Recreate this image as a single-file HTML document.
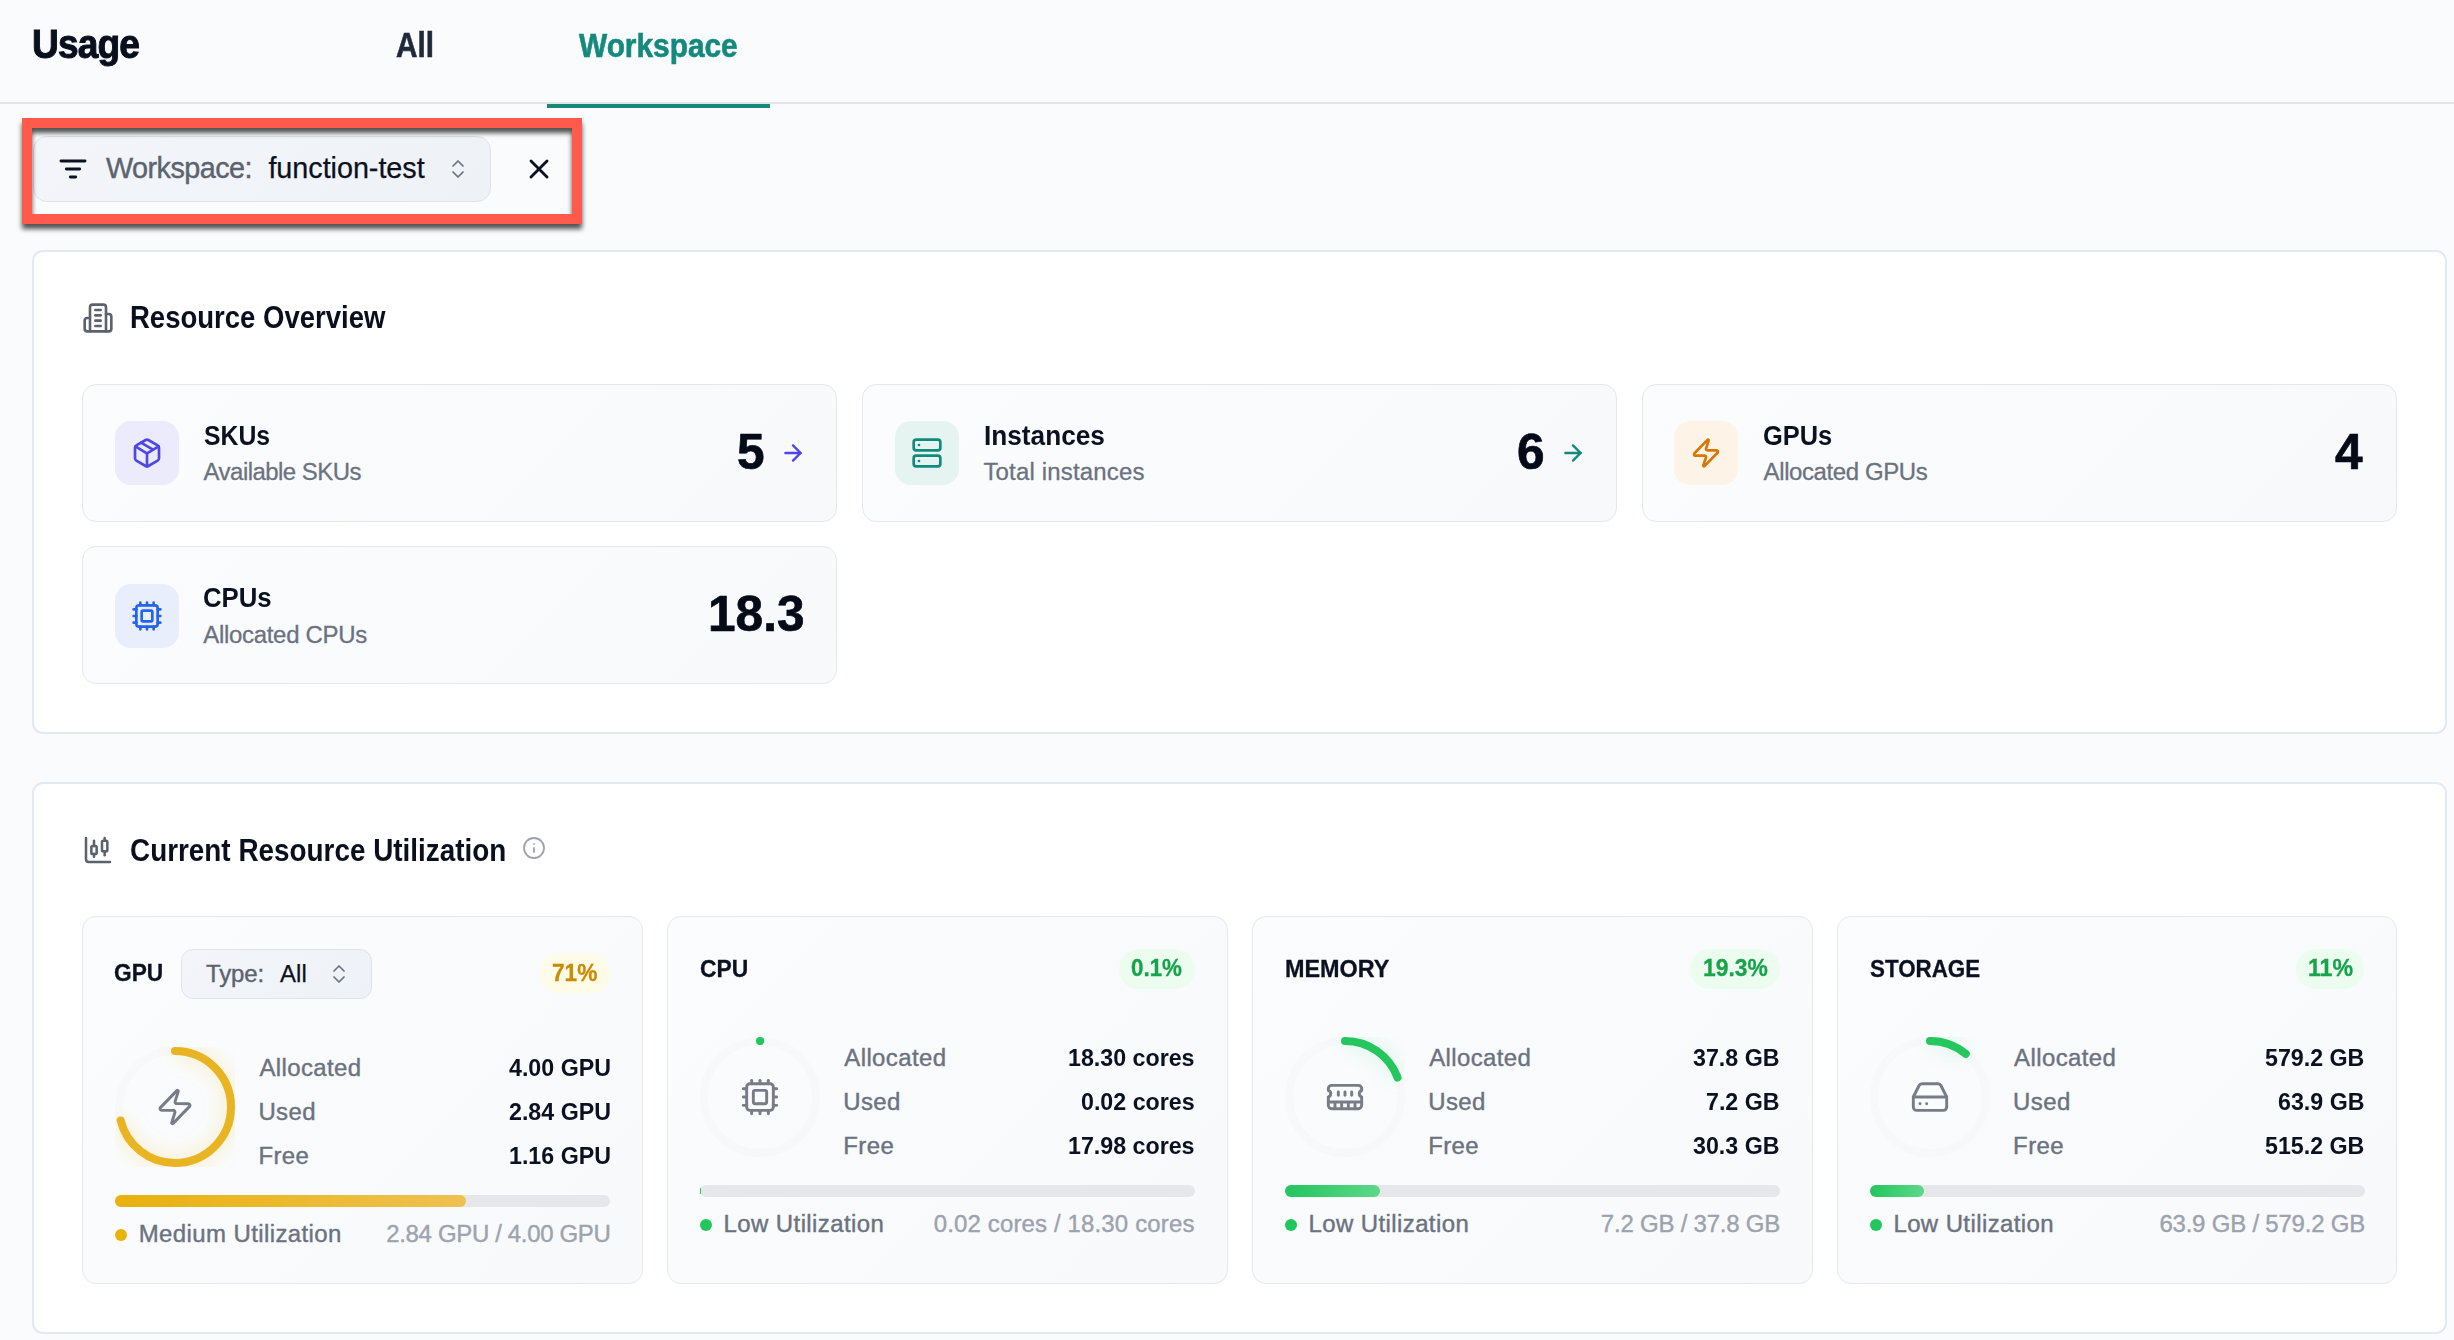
<!DOCTYPE html>
<html><head><meta charset="utf-8"><title>Usage</title>
<style>
html,body{margin:0;padding:0;}
body{width:2454px;height:1340px;overflow:hidden;position:relative;background:#fafbfc;font-family:"Liberation Sans",sans-serif;}
.t{position:absolute;white-space:nowrap;line-height:1;}
.b{position:absolute;}
.ic{position:absolute;overflow:visible;}
.dn{position:absolute;overflow:hidden;}
.frame{position:absolute;left:22px;top:118px;width:560px;height:106px;box-sizing:border-box;border:10px solid #ff5a4c;filter:drop-shadow(0 5px 2.5px rgba(0,0,0,0.68));}
</style></head><body>
<div class="b" style="left:0px;top:102px;width:2454px;height:1.5px;background:#e3e4e6;"></div><div class="b" style="left:547px;top:104px;width:223px;height:4px;background:#14897c;"></div><div class="b" style="left:33px;top:136.3px;width:457.5px;height:65.3px;background:linear-gradient(135deg,#f3f5f9,#eef2f7);border:1.5px solid #dde3ec;border-radius:14px;box-sizing:border-box;"></div><div class="b" style="left:32.3px;top:250px;width:2414.3px;height:484px;background:#fff;border:2px solid #e3e9f1;border-radius:11px;box-sizing:border-box;"></div><div class="b" style="left:32.3px;top:781.8px;width:2414.3px;height:551.9px;background:#fff;border:2px solid #e3e9f1;border-radius:11px;box-sizing:border-box;"></div><div class="b" style="left:82.2px;top:384.3px;width:755.2px;height:137.3px;background:linear-gradient(135deg,#fbfcfd,#f8f9fb);border:1.5px solid #e3e8ef;border-radius:14px;box-sizing:border-box;"></div><div class="b" style="left:862.1px;top:384.3px;width:755.2px;height:137.3px;background:linear-gradient(135deg,#fbfcfd,#f8f9fb);border:1.5px solid #e3e8ef;border-radius:14px;box-sizing:border-box;"></div><div class="b" style="left:1642.0px;top:384.3px;width:755.2px;height:137.3px;background:linear-gradient(135deg,#fbfcfd,#f8f9fb);border:1.5px solid #e3e8ef;border-radius:14px;box-sizing:border-box;"></div><div class="b" style="left:82.2px;top:546.4px;width:755.2px;height:137.3px;background:linear-gradient(135deg,#fbfcfd,#f8f9fb);border:1.5px solid #e3e8ef;border-radius:14px;box-sizing:border-box;"></div><div class="b" style="left:115px;top:421.3px;width:64px;height:64px;background:#ebebfc;border-radius:16px;"></div><div class="b" style="left:894.6px;top:421.3px;width:64px;height:64px;background:#e6f4f1;border-radius:16px;"></div><div class="b" style="left:1674.4px;top:421.3px;width:64px;height:64px;background:#fdf3e6;border-radius:16px;"></div><div class="b" style="left:115px;top:583.5px;width:64px;height:64px;background:#e8eefc;border-radius:16px;"></div><div class="b" style="left:82.2px;top:916px;width:560.5px;height:367.5px;background:linear-gradient(135deg,#fbfcfd,#f8f9fb);border:1.5px solid #e3e8ef;border-radius:14px;box-sizing:border-box;"></div><div class="b" style="left:667.1px;top:916px;width:560.5px;height:367.5px;background:linear-gradient(135deg,#fbfcfd,#f8f9fb);border:1.5px solid #e3e8ef;border-radius:14px;box-sizing:border-box;"></div><div class="b" style="left:1252.0px;top:916px;width:560.5px;height:367.5px;background:linear-gradient(135deg,#fbfcfd,#f8f9fb);border:1.5px solid #e3e8ef;border-radius:14px;box-sizing:border-box;"></div><div class="b" style="left:1836.9px;top:916px;width:560.5px;height:367.5px;background:linear-gradient(135deg,#fbfcfd,#f8f9fb);border:1.5px solid #e3e8ef;border-radius:14px;box-sizing:border-box;"></div><div class="b" style="left:180.5px;top:949px;width:191.4px;height:49.8px;background:linear-gradient(135deg,#f3f5f9,#eef2f7);border:1.5px solid #dde3ec;border-radius:12px;box-sizing:border-box;"></div><div class="b" style="left:540.4px;top:954px;width:69.6px;height:39.4px;background:#fefbe6;border-radius:20px;"></div><div class="b" style="left:1119.4px;top:949px;width:75.2px;height:40px;background:#ecfdf0;border-radius:20px;"></div><div class="b" style="left:1690px;top:949px;width:89.8px;height:40px;background:#ecfdf0;border-radius:20px;"></div><div class="b" style="left:2295.8px;top:949px;width:68.4px;height:40px;background:#ecfdf0;border-radius:20px;"></div><div class="b" style="left:115.0px;top:1195px;width:494.9000000000001px;height:12px;background:#e5e7eb;border-radius:6px;"></div><div class="b" style="left:115.0px;top:1195px;width:351.379px;height:12px;background:linear-gradient(90deg,#e8b10e,#efc150);border-radius:6px;"></div><div class="b" style="left:115.0px;top:1229px;width:12px;height:12px;background:#eab308;border-radius:6px;"></div><div class="b" style="left:699.9px;top:1185px;width:494.9px;height:12px;background:#e5e7eb;border-radius:6px;"></div><div class="b" style="left:699.7px;top:1188px;width:1.5px;height:6px;background:#22c55e;border-radius:1px;"></div><div class="b" style="left:699.9px;top:1219px;width:12px;height:12px;background:#22c55e;border-radius:6px;"></div><div class="b" style="left:1284.8px;top:1185px;width:494.9000000000001px;height:12px;background:#e5e7eb;border-radius:6px;"></div><div class="b" style="left:1284.8px;top:1185px;width:95.51570000000002px;height:12px;background:linear-gradient(90deg,#22c55e,#5dd88a);border-radius:6px;"></div><div class="b" style="left:1284.8px;top:1219px;width:12px;height:12px;background:#22c55e;border-radius:6px;"></div><div class="b" style="left:1869.7px;top:1185px;width:494.89999999999986px;height:12px;background:#e5e7eb;border-radius:6px;"></div><div class="b" style="left:1869.7px;top:1185px;width:54.438999999999986px;height:12px;background:linear-gradient(90deg,#22c55e,#5dd88a);border-radius:6px;"></div><div class="b" style="left:1869.7px;top:1219px;width:12px;height:12px;background:#22c55e;border-radius:6px;"></div>
<svg class="dn" style="left:115.0px;top:1047px" width="120" height="120" viewBox="0 0 120 120">
<defs><radialGradient id="gGPU" cx="50%" cy="50%" r="50%"><stop offset="0%" stop-color="#ffffff" stop-opacity="0.7"/><stop offset="100%" stop-color="#ffffff" stop-opacity="0"/></radialGradient>
<filter id="fGPU" x="-30%" y="-30%" width="160%" height="160%"><feGaussianBlur stdDeviation="9"/></filter></defs>
<circle cx="60" cy="60" r="56" fill="none" stroke="#f6f7f9" stroke-opacity="0.8" stroke-width="8"/>
<circle cx="60" cy="60" r="56" fill="none" stroke="rgba(234,179,8,0.16)" stroke-width="16" stroke-dasharray="249.82 351.86" transform="rotate(-90 60 60)" filter="url(#fGPU)"/>
<circle cx="60" cy="60" r="56" fill="none" stroke="#e9b422" stroke-width="8" stroke-linecap="round" stroke-dasharray="249.82 351.86" transform="rotate(-90 60 60)"/>
</svg><svg class="dn" style="left:699.9px;top:1037px" width="120" height="120" viewBox="0 0 120 120">
<defs><radialGradient id="gCPU" cx="50%" cy="50%" r="50%"><stop offset="0%" stop-color="#ffffff" stop-opacity="0.7"/><stop offset="100%" stop-color="#ffffff" stop-opacity="0"/></radialGradient>
<filter id="fCPU" x="-30%" y="-30%" width="160%" height="160%"><feGaussianBlur stdDeviation="9"/></filter></defs>
<circle cx="60" cy="60" r="56" fill="none" stroke="#f6f7f9" stroke-opacity="0.8" stroke-width="8"/>
<circle cx="60" cy="60" r="56" fill="none" stroke="rgba(34,197,94,0.10)" stroke-width="16" stroke-dasharray="0.35 351.86" transform="rotate(-90 60 60)" filter="url(#fCPU)"/>
<circle cx="60" cy="60" r="56" fill="none" stroke="#26c65f" stroke-width="8" stroke-linecap="round" stroke-dasharray="0.35 351.86" transform="rotate(-90 60 60)"/>
</svg><svg class="dn" style="left:1284.8px;top:1037px" width="120" height="120" viewBox="0 0 120 120">
<defs><radialGradient id="gMEMORY" cx="50%" cy="50%" r="50%"><stop offset="0%" stop-color="#ffffff" stop-opacity="0.7"/><stop offset="100%" stop-color="#ffffff" stop-opacity="0"/></radialGradient>
<filter id="fMEMORY" x="-30%" y="-30%" width="160%" height="160%"><feGaussianBlur stdDeviation="9"/></filter></defs>
<circle cx="60" cy="60" r="56" fill="none" stroke="#f6f7f9" stroke-opacity="0.8" stroke-width="8"/>
<circle cx="60" cy="60" r="56" fill="none" stroke="rgba(34,197,94,0.10)" stroke-width="16" stroke-dasharray="67.91 351.86" transform="rotate(-90 60 60)" filter="url(#fMEMORY)"/>
<circle cx="60" cy="60" r="56" fill="none" stroke="#26c65f" stroke-width="8" stroke-linecap="round" stroke-dasharray="67.91 351.86" transform="rotate(-90 60 60)"/>
</svg><svg class="dn" style="left:1869.7px;top:1037px" width="120" height="120" viewBox="0 0 120 120">
<defs><radialGradient id="gSTORAGE" cx="50%" cy="50%" r="50%"><stop offset="0%" stop-color="#ffffff" stop-opacity="0.7"/><stop offset="100%" stop-color="#ffffff" stop-opacity="0"/></radialGradient>
<filter id="fSTORAGE" x="-30%" y="-30%" width="160%" height="160%"><feGaussianBlur stdDeviation="9"/></filter></defs>
<circle cx="60" cy="60" r="56" fill="none" stroke="#f6f7f9" stroke-opacity="0.8" stroke-width="8"/>
<circle cx="60" cy="60" r="56" fill="none" stroke="rgba(34,197,94,0.10)" stroke-width="16" stroke-dasharray="38.70 351.86" transform="rotate(-90 60 60)" filter="url(#fSTORAGE)"/>
<circle cx="60" cy="60" r="56" fill="none" stroke="#26c65f" stroke-width="8" stroke-linecap="round" stroke-dasharray="38.70 351.86" transform="rotate(-90 60 60)"/>
</svg>
<svg class="ic" style="left:82px;top:302px;" width="32" height="32" viewBox="0 0 24 24" fill="none" stroke="#5b626e" stroke-width="1.95" stroke-linecap="round" stroke-linejoin="round"><path d="M6 22V4a2 2 0 0 1 2-2h8a2 2 0 0 1 2 2v18Z"/><path d="M6 12H4a2 2 0 0 0-2 2v6a2 2 0 0 0 2 2h2"/><path d="M18 9h2a2 2 0 0 1 2 2v9a2 2 0 0 1-2 2h-2"/><path d="M10 6h4"/><path d="M10 10h4"/><path d="M10 14h4"/><path d="M10 18h4"/></svg><svg class="ic" style="left:82px;top:834px;" width="32" height="32" viewBox="0 0 24 24" fill="none" stroke="#5b626e" stroke-width="1.9" stroke-linecap="round" stroke-linejoin="round"><path d="M9 5v4"/><rect width="4" height="6" x="7" y="9" rx="1"/><path d="M9 15v2"/><path d="M17 3v2"/><rect width="4" height="8" x="15" y="5" rx="1"/><path d="M17 13v3"/><path d="M3 3v16a2 2 0 0 0 2 2h16"/></svg><svg class="ic" style="left:522px;top:836px;" width="24" height="24" viewBox="0 0 24 24" fill="none" stroke="#9ca3af" stroke-width="1.8" stroke-linecap="round" stroke-linejoin="round"><circle cx="12" cy="12" r="10"/><path d="M12 16v-4"/><path d="M12 8h.01"/></svg><svg class="ic" style="left:57px;top:153px;" width="32" height="32" viewBox="0 0 24 24" fill="none" stroke="#0b1120" stroke-width="2.2" stroke-linecap="round" stroke-linejoin="round"><path d="M3 6h18"/><path d="M7 12h10"/><path d="M10 18h4"/></svg><svg class="ic" style="left:446px;top:157px;" width="24" height="24" viewBox="0 0 24 24" fill="none" stroke="#6b7280" stroke-width="1.75" stroke-linecap="round" stroke-linejoin="round"><path d="m7 15 5 5 5-5"/><path d="m7 9 5-5 5 5"/></svg><svg class="ic" style="left:523px;top:152.9px;" width="32" height="32" viewBox="0 0 24 24" fill="none" stroke="#0b1120" stroke-width="2.15" stroke-linecap="round" stroke-linejoin="round"><path d="M18 6 6 18"/><path d="m6 6 12 12"/></svg><svg class="ic" style="left:326.9px;top:962.3px;" width="24" height="24" viewBox="0 0 24 24" fill="none" stroke="#6b7280" stroke-width="1.75" stroke-linecap="round" stroke-linejoin="round"><path d="m7 15 5 5 5-5"/><path d="m7 9 5-5 5 5"/></svg><svg class="ic" style="left:131px;top:437.3px;" width="32" height="32" viewBox="0 0 24 24" fill="none" stroke="#4f46e5" stroke-width="2" stroke-linecap="round" stroke-linejoin="round"><path d="M11 21.73a2 2 0 0 0 2 0l7-4A2 2 0 0 0 21 16V8a2 2 0 0 0-1-1.73l-7-4a2 2 0 0 0-2 0l-7 4A2 2 0 0 0 3 8v8a2 2 0 0 0 1 1.73z"/><path d="M12 22V12"/><path d="m3.3 7 7.703 4.734a2 2 0 0 0 1.994 0L20.7 7"/><path d="m7.5 4.27 9 5.15"/></svg><svg class="ic" style="left:910.6px;top:437.3px;" width="32" height="32" viewBox="0 0 24 24" fill="none" stroke="#0f8a7c" stroke-width="2" stroke-linecap="round" stroke-linejoin="round"><rect width="20" height="8" x="2" y="2" rx="2" ry="2"/><rect width="20" height="8" x="2" y="14" rx="2" ry="2"/><line x1="6" x2="6.01" y1="6" y2="6"/><line x1="6" x2="6.01" y1="18" y2="18"/></svg><svg class="ic" style="left:1690.4px;top:437.3px;" width="32" height="32" viewBox="0 0 24 24" fill="none" stroke="#d97706" stroke-width="2" stroke-linecap="round" stroke-linejoin="round"><path d="M4 14a1 1 0 0 1-.78-1.63l9.9-10.2a.5.5 0 0 1 .86.46l-1.92 6.02A1 1 0 0 0 13 10h7a1 1 0 0 1 .78 1.63l-9.9 10.2a.5.5 0 0 1-.86-.46l1.92-6.02A1 1 0 0 0 11 14z"/></svg><svg class="ic" style="left:131px;top:599.5px;" width="32" height="32" viewBox="0 0 24 24" fill="none" stroke="#2563eb" stroke-width="2" stroke-linecap="round" stroke-linejoin="round"><path d="M12 20v2"/><path d="M12 2v2"/><path d="M17 20v2"/><path d="M17 2v2"/><path d="M2 12h2"/><path d="M2 17h2"/><path d="M2 7h2"/><path d="M20 12h2"/><path d="M20 17h2"/><path d="M20 7h2"/><path d="M7 20v2"/><path d="M7 2v2"/><rect x="4" y="4" width="16" height="16" rx="2"/><rect x="8" y="8" width="8" height="8" rx="1"/></svg><svg class="ic" style="left:780.2px;top:440px;" width="26" height="26" viewBox="0 0 24 24" fill="none" stroke="#4f46e5" stroke-width="2.2" stroke-linecap="round" stroke-linejoin="round"><path d="M5 12h14"/><path d="m12 5 7 7-7 7"/></svg><svg class="ic" style="left:1560.3px;top:440px;" width="26" height="26" viewBox="0 0 24 24" fill="none" stroke="#0f8a7c" stroke-width="2.2" stroke-linecap="round" stroke-linejoin="round"><path d="M5 12h14"/><path d="m12 5 7 7-7 7"/></svg><svg class="ic" style="left:155.0px;top:1087px;" width="40" height="40" viewBox="0 0 24 24" fill="none" stroke="#777c86" stroke-width="1.75" stroke-linecap="round" stroke-linejoin="round"><path d="M4 14a1 1 0 0 1-.78-1.63l9.9-10.2a.5.5 0 0 1 .86.46l-1.92 6.02A1 1 0 0 0 13 10h7a1 1 0 0 1 .78 1.63l-9.9 10.2a.5.5 0 0 1-.86-.46l1.92-6.02A1 1 0 0 0 11 14z"/></svg><svg class="ic" style="left:739.9px;top:1077px;" width="40" height="40" viewBox="0 0 24 24" fill="none" stroke="#777c86" stroke-width="1.75" stroke-linecap="round" stroke-linejoin="round"><path d="M12 20v2"/><path d="M12 2v2"/><path d="M17 20v2"/><path d="M17 2v2"/><path d="M2 12h2"/><path d="M2 17h2"/><path d="M2 7h2"/><path d="M20 12h2"/><path d="M20 17h2"/><path d="M20 7h2"/><path d="M7 20v2"/><path d="M7 2v2"/><rect x="4" y="4" width="16" height="16" rx="2"/><rect x="8" y="8" width="8" height="8" rx="1"/></svg><svg class="ic" style="left:1324.8px;top:1077px;" width="40" height="40" viewBox="0 0 24 24" fill="none" stroke="#777c86" stroke-width="1.75" stroke-linecap="round" stroke-linejoin="round"><path d="M6 19v-3"/><path d="M10 19v-3"/><path d="M14 19v-3"/><path d="M18 19v-3"/><path d="M8 11V9"/><path d="M16 11V9"/><path d="M12 11V9"/><path d="M2 15h20"/><path d="M2 7a2 2 0 0 1 2-2h16a2 2 0 0 1 2 2v1.1a2 2 0 0 0 0 3.837V17a2 2 0 0 1-2 2H4a2 2 0 0 1-2-2v-5.1a2 2 0 0 0 0-3.837Z"/></svg><svg class="ic" style="left:1909.7px;top:1077px;" width="40" height="40" viewBox="0 0 24 24" fill="none" stroke="#777c86" stroke-width="1.75" stroke-linecap="round" stroke-linejoin="round"><line x1="22" x2="2" y1="12" y2="12"/><path d="M5.45 5.11 2 12v6a2 2 0 0 0 2 2h16a2 2 0 0 0 2-2v-6l-3.45-6.89A2 2 0 0 0 16.76 4H7.24a2 2 0 0 0-1.79 1.11z"/><line x1="6" x2="6.01" y1="16" y2="16"/><line x1="10" x2="10.01" y1="16" y2="16"/></svg>
<div class="t" style="left:32.20px;top:23.85px;font-size:41.28px;letter-spacing:-1.000px;font-weight:700;color:#0a0f1e;transform:scaleX(0.8999);transform-origin:0 0;-webkit-text-stroke:1.0px #0a0f1e;">Usage</div><div class="t" style="left:396.30px;top:27.96px;font-size:34.30px;letter-spacing:0.000px;font-weight:700;color:#1e293b;transform:scaleX(0.8677);transform-origin:0 0;-webkit-text-stroke:0.6px #1e293b;">All</div><div class="t" style="left:579.40px;top:28.94px;font-size:33.14px;letter-spacing:0.000px;font-weight:700;color:#14897c;transform:scaleX(0.9009);transform-origin:0 0;-webkit-text-stroke:0.6px #14897c;">Workspace</div><div class="t" style="left:105.90px;top:153.53px;font-size:28.78px;letter-spacing:-0.517px;font-weight:400;color:#5c6370;-webkit-text-stroke:0.4px #5c6370;">Workspace:</div><div class="t" style="left:268.40px;top:153.53px;font-size:28.78px;letter-spacing:-0.034px;font-weight:400;color:#0b1120;-webkit-text-stroke:0.25px #0b1120;">function-test</div><div class="t" style="left:130.03px;top:302.26px;font-size:31.11px;letter-spacing:0.000px;font-weight:700;color:#0a0f1e;transform:scaleX(0.8843);transform-origin:0 0;">Resource Overview</div><div class="t" style="left:129.90px;top:835.16px;font-size:31.11px;letter-spacing:0.000px;font-weight:700;color:#0a0f1e;transform:scaleX(0.8958);transform-origin:0 0;">Current Resource Utilization</div><div class="t" style="left:203.60px;top:421.75px;font-size:28.05px;letter-spacing:0.000px;font-weight:700;color:#0b1120;transform:scaleX(0.8839);transform-origin:0 0;">SKUs</div><div class="t" style="left:983.77px;top:421.75px;font-size:28.05px;letter-spacing:0.000px;font-weight:700;color:#0b1120;transform:scaleX(0.9343);transform-origin:0 0;">Instances</div><div class="t" style="left:1762.69px;top:421.75px;font-size:28.05px;letter-spacing:0.000px;font-weight:700;color:#0b1120;transform:scaleX(0.9067);transform-origin:0 0;">GPUs</div><div class="t" style="left:202.98px;top:583.95px;font-size:28.05px;letter-spacing:0.000px;font-weight:700;color:#0b1120;transform:scaleX(0.9178);transform-origin:0 0;">CPUs</div><div class="t" style="left:203.60px;top:460.39px;font-size:23.98px;letter-spacing:-0.529px;font-weight:400;color:#6b7280;-webkit-text-stroke:0.3px #6b7280;">Available SKUs</div><div class="t" style="left:983.40px;top:460.39px;font-size:23.98px;letter-spacing:0.174px;font-weight:400;color:#6b7280;-webkit-text-stroke:0.3px #6b7280;">Total instances</div><div class="t" style="left:1763.60px;top:460.39px;font-size:23.98px;letter-spacing:-0.385px;font-weight:400;color:#6b7280;-webkit-text-stroke:0.3px #6b7280;">Allocated GPUs</div><div class="t" style="left:203.20px;top:622.59px;font-size:23.98px;letter-spacing:-0.290px;font-weight:400;color:#6b7280;-webkit-text-stroke:0.3px #6b7280;">Allocated CPUs</div><div class="t" style="left:708.27px;top:590.20px;font-size:49.13px;letter-spacing:0.000px;font-weight:700;color:#050a18;transform:scaleX(1.0091);transform-origin:0 0;-webkit-text-stroke:0.7px #050a18;">18.3</div><div class="t" style="left:737.16px;top:428.20px;font-size:49.13px;letter-spacing:0.000px;font-weight:700;color:#050a18;transform:scaleX(1.0091);transform-origin:0 0;-webkit-text-stroke:0.7px #050a18;">5</div><div class="t" style="left:1517.36px;top:428.20px;font-size:49.13px;letter-spacing:0.000px;font-weight:700;color:#050a18;transform:scaleX(1.0091);transform-origin:0 0;-webkit-text-stroke:0.7px #050a18;">6</div><div class="t" style="left:2335.44px;top:428.20px;font-size:49.13px;letter-spacing:0.000px;font-weight:700;color:#050a18;transform:scaleX(1.0091);transform-origin:0 0;-webkit-text-stroke:0.7px #050a18;">4</div><div class="t" style="left:114.27px;top:961.05px;font-size:24.27px;letter-spacing:0.000px;font-weight:700;color:#0b1120;transform:scaleX(0.9342);transform-origin:0 0;-webkit-text-stroke:0.3px #0b1120;">GPU</div><div class="t" style="left:552.07px;top:961.45px;font-size:24.27px;letter-spacing:0.000px;font-weight:700;color:#ca8a04;transform:scaleX(0.9342);transform-origin:0 0;-webkit-text-stroke:0.3px #ca8a04;">71%</div><div class="t" style="left:259.40px;top:1056.19px;font-size:23.98px;letter-spacing:0.391px;font-weight:400;color:#6b7280;-webkit-text-stroke:0.4px #6b7280;">Allocated</div><div class="t" style="left:508.80px;top:1056.19px;font-size:23.98px;letter-spacing:0.000px;font-weight:700;color:#0b1120;transform:scaleX(0.9688);transform-origin:0 0;">4.00 GPU</div><div class="t" style="left:258.40px;top:1100.19px;font-size:23.98px;letter-spacing:0.391px;font-weight:400;color:#6b7280;-webkit-text-stroke:0.4px #6b7280;">Used</div><div class="t" style="left:508.80px;top:1100.19px;font-size:23.98px;letter-spacing:0.000px;font-weight:700;color:#0b1120;transform:scaleX(0.9688);transform-origin:0 0;">2.84 GPU</div><div class="t" style="left:258.40px;top:1144.19px;font-size:23.98px;letter-spacing:0.391px;font-weight:400;color:#6b7280;-webkit-text-stroke:0.4px #6b7280;">Free</div><div class="t" style="left:508.80px;top:1144.19px;font-size:23.98px;letter-spacing:0.000px;font-weight:700;color:#0b1120;transform:scaleX(0.9688);transform-origin:0 0;">1.16 GPU</div><div class="t" style="left:138.70px;top:1222.49px;font-size:23.98px;letter-spacing:0.407px;font-weight:400;color:#6b7280;-webkit-text-stroke:0.4px #6b7280;">Medium Utilization</div><div class="t" style="left:386.30px;top:1222.49px;font-size:23.98px;letter-spacing:-0.332px;font-weight:400;color:#9ca3af;-webkit-text-stroke:0.4px #9ca3af;">2.84 GPU / 4.00 GPU</div><div class="t" style="left:699.66px;top:956.55px;font-size:24.27px;letter-spacing:0.000px;font-weight:700;color:#0b1120;transform:scaleX(0.9415);transform-origin:0 0;-webkit-text-stroke:0.3px #0b1120;">CPU</div><div class="t" style="left:1131.40px;top:956.45px;font-size:24.27px;letter-spacing:0.000px;font-weight:700;color:#16a34a;transform:scaleX(0.9208);transform-origin:0 0;-webkit-text-stroke:0.3px #16a34a;">0.1%</div><div class="t" style="left:844.30px;top:1046.19px;font-size:23.98px;letter-spacing:0.391px;font-weight:400;color:#6b7280;-webkit-text-stroke:0.4px #6b7280;">Allocated</div><div class="t" style="left:1068.19px;top:1046.19px;font-size:23.98px;letter-spacing:0.000px;font-weight:700;color:#0b1120;transform:scaleX(0.9688);transform-origin:0 0;">18.30 cores</div><div class="t" style="left:843.30px;top:1090.19px;font-size:23.98px;letter-spacing:0.391px;font-weight:400;color:#6b7280;-webkit-text-stroke:0.4px #6b7280;">Used</div><div class="t" style="left:1081.11px;top:1090.19px;font-size:23.98px;letter-spacing:0.000px;font-weight:700;color:#0b1120;transform:scaleX(0.9688);transform-origin:0 0;">0.02 cores</div><div class="t" style="left:843.30px;top:1134.19px;font-size:23.98px;letter-spacing:0.391px;font-weight:400;color:#6b7280;-webkit-text-stroke:0.4px #6b7280;">Free</div><div class="t" style="left:1068.19px;top:1134.19px;font-size:23.98px;letter-spacing:0.000px;font-weight:700;color:#0b1120;transform:scaleX(0.9688);transform-origin:0 0;">17.98 cores</div><div class="t" style="left:723.60px;top:1212.49px;font-size:23.98px;letter-spacing:0.407px;font-weight:400;color:#6b7280;-webkit-text-stroke:0.4px #6b7280;">Low Utilization</div><div class="t" style="left:933.70px;top:1212.49px;font-size:23.98px;letter-spacing:0.154px;font-weight:400;color:#9ca3af;-webkit-text-stroke:0.4px #9ca3af;">0.02 cores / 18.30 cores</div><div class="t" style="left:1285.14px;top:956.55px;font-size:24.27px;letter-spacing:0.000px;font-weight:700;color:#0b1120;transform:scaleX(0.9644);transform-origin:0 0;-webkit-text-stroke:0.3px #0b1120;">MEMORY</div><div class="t" style="left:1702.76px;top:956.45px;font-size:24.27px;letter-spacing:0.000px;font-weight:700;color:#16a34a;transform:scaleX(0.9416);transform-origin:0 0;-webkit-text-stroke:0.3px #16a34a;">19.3%</div><div class="t" style="left:1429.20px;top:1046.19px;font-size:23.98px;letter-spacing:0.391px;font-weight:400;color:#6b7280;-webkit-text-stroke:0.4px #6b7280;">Allocated</div><div class="t" style="left:1693.12px;top:1046.19px;font-size:23.98px;letter-spacing:0.000px;font-weight:700;color:#0b1120;transform:scaleX(0.9688);transform-origin:0 0;">37.8 GB</div><div class="t" style="left:1428.20px;top:1090.19px;font-size:23.98px;letter-spacing:0.391px;font-weight:400;color:#6b7280;-webkit-text-stroke:0.4px #6b7280;">Used</div><div class="t" style="left:1706.03px;top:1090.19px;font-size:23.98px;letter-spacing:0.000px;font-weight:700;color:#0b1120;transform:scaleX(0.9688);transform-origin:0 0;">7.2 GB</div><div class="t" style="left:1428.20px;top:1134.19px;font-size:23.98px;letter-spacing:0.391px;font-weight:400;color:#6b7280;-webkit-text-stroke:0.4px #6b7280;">Free</div><div class="t" style="left:1693.12px;top:1134.19px;font-size:23.98px;letter-spacing:0.000px;font-weight:700;color:#0b1120;transform:scaleX(0.9688);transform-origin:0 0;">30.3 GB</div><div class="t" style="left:1308.50px;top:1212.49px;font-size:23.98px;letter-spacing:0.407px;font-weight:400;color:#6b7280;-webkit-text-stroke:0.4px #6b7280;">Low Utilization</div><div class="t" style="left:1600.80px;top:1212.49px;font-size:23.98px;letter-spacing:-0.203px;font-weight:400;color:#9ca3af;-webkit-text-stroke:0.4px #9ca3af;">7.2 GB / 37.8 GB</div><div class="t" style="left:1870.10px;top:956.55px;font-size:24.27px;letter-spacing:0.000px;font-weight:700;color:#0b1120;transform:scaleX(0.9215);transform-origin:0 0;-webkit-text-stroke:0.3px #0b1120;">STORAGE</div><div class="t" style="left:2307.74px;top:956.45px;font-size:24.27px;letter-spacing:0.000px;font-weight:700;color:#16a34a;transform:scaleX(0.9551);transform-origin:0 0;-webkit-text-stroke:0.3px #16a34a;">11%</div><div class="t" style="left:2014.10px;top:1046.19px;font-size:23.98px;letter-spacing:0.391px;font-weight:400;color:#6b7280;-webkit-text-stroke:0.4px #6b7280;">Allocated</div><div class="t" style="left:2265.11px;top:1046.19px;font-size:23.98px;letter-spacing:0.000px;font-weight:700;color:#0b1120;transform:scaleX(0.9688);transform-origin:0 0;">579.2 GB</div><div class="t" style="left:2013.10px;top:1090.19px;font-size:23.98px;letter-spacing:0.391px;font-weight:400;color:#6b7280;-webkit-text-stroke:0.4px #6b7280;">Used</div><div class="t" style="left:2278.02px;top:1090.19px;font-size:23.98px;letter-spacing:0.000px;font-weight:700;color:#0b1120;transform:scaleX(0.9688);transform-origin:0 0;">63.9 GB</div><div class="t" style="left:2013.10px;top:1134.19px;font-size:23.98px;letter-spacing:0.391px;font-weight:400;color:#6b7280;-webkit-text-stroke:0.4px #6b7280;">Free</div><div class="t" style="left:2265.11px;top:1134.19px;font-size:23.98px;letter-spacing:0.000px;font-weight:700;color:#0b1120;transform:scaleX(0.9688);transform-origin:0 0;">515.2 GB</div><div class="t" style="left:1893.40px;top:1212.49px;font-size:23.98px;letter-spacing:0.407px;font-weight:400;color:#6b7280;-webkit-text-stroke:0.4px #6b7280;">Low Utilization</div><div class="t" style="left:2159.40px;top:1212.49px;font-size:23.98px;letter-spacing:-0.200px;font-weight:400;color:#9ca3af;-webkit-text-stroke:0.4px #9ca3af;">63.9 GB / 579.2 GB</div><div class="t" style="left:206.00px;top:961.79px;font-size:23.98px;letter-spacing:-0.116px;font-weight:400;color:#5c6370;-webkit-text-stroke:0.4px #5c6370;">Type:</div><div class="t" style="left:280.00px;top:961.79px;font-size:23.98px;letter-spacing:0.094px;font-weight:400;color:#0b1120;-webkit-text-stroke:0.25px #0b1120;">All</div>
<div class="frame"></div>
</body></html>
